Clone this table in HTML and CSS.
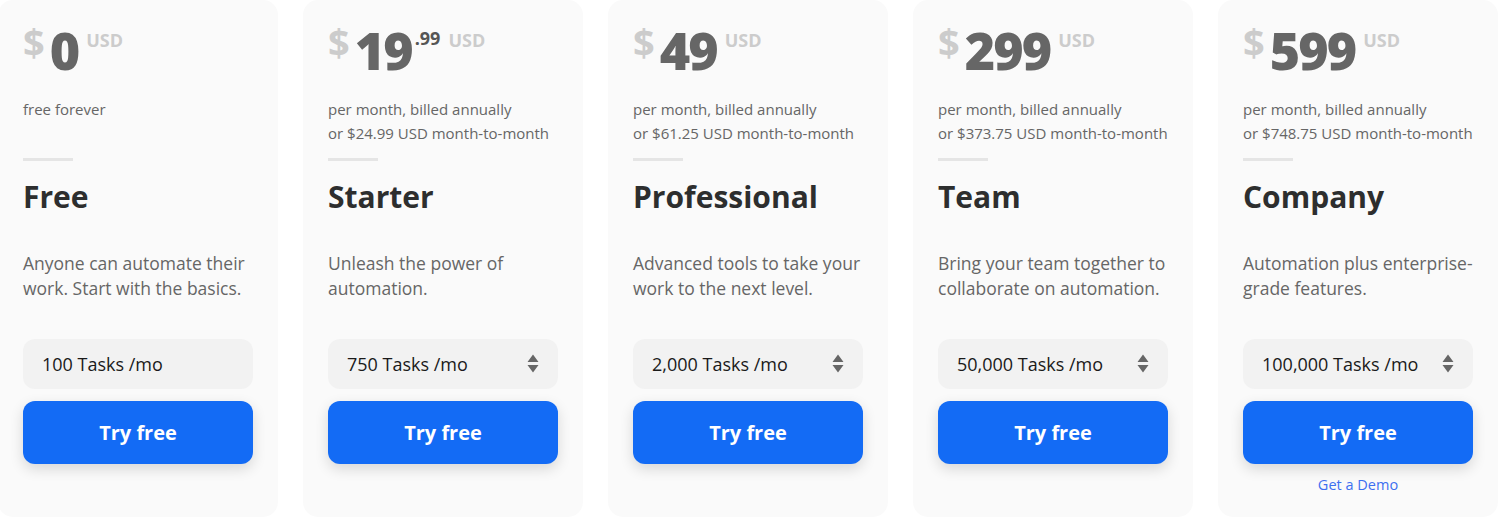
FILE: index.html
```html
<!DOCTYPE html>
<html lang="en">
<head>
<meta charset="utf-8">
<title>Pricing</title>
<link rel="stylesheet" href="styles.css">
</head>
<body>
<div class="plans">
  <div class="card">
    <div class="price"><span class="cur">$</span><span class="amt">0</span><span class="usd">USD</span></div>
    <p class="sub">free forever</p>
    <div class="rule"></div>
    <h2 class="name">Free</h2>
    <p class="desc">Anyone can automate their work. Start with the basics.</p>
    <div class="tasks"><span>100 Tasks /mo</span></div>
    <button class="try">Try free</button>
  </div>
  <div class="card">
    <div class="price"><span class="cur">$</span><span class="amt">19</span><span class="cents">.99</span><span class="usd">USD</span></div>
    <p class="sub">per month, billed annually<br>or $24.99 USD month-to-month</p>
    <div class="rule"></div>
    <h2 class="name">Starter</h2>
    <p class="desc">Unleash the power of automation.</p>
    <div class="tasks"><span>750 Tasks /mo</span><svg class="arrows" width="12" height="20" viewBox="0 0 12 20"><path d="M6 0.5L11.5 8H0.5Z M0.5 11H11.5L6 18.5Z" fill="#666"/></svg></div>
    <button class="try">Try free</button>
  </div>
  <div class="card">
    <div class="price"><span class="cur">$</span><span class="amt">49</span><span class="usd">USD</span></div>
    <p class="sub">per month, billed annually<br>or $61.25 USD month-to-month</p>
    <div class="rule"></div>
    <h2 class="name">Professional</h2>
    <p class="desc">Advanced tools to take your work to the next level.</p>
    <div class="tasks"><span>2,000 Tasks /mo</span><svg class="arrows" width="12" height="20" viewBox="0 0 12 20"><path d="M6 0.5L11.5 8H0.5Z M0.5 11H11.5L6 18.5Z" fill="#666"/></svg></div>
    <button class="try">Try free</button>
  </div>
  <div class="card">
    <div class="price"><span class="cur">$</span><span class="amt">299</span><span class="usd">USD</span></div>
    <p class="sub">per month, billed annually<br>or $373.75 USD month-to-month</p>
    <div class="rule"></div>
    <h2 class="name">Team</h2>
    <p class="desc">Bring your team together to collaborate on automation.</p>
    <div class="tasks"><span>50,000 Tasks /mo</span><svg class="arrows" width="12" height="20" viewBox="0 0 12 20"><path d="M6 0.5L11.5 8H0.5Z M0.5 11H11.5L6 18.5Z" fill="#666"/></svg></div>
    <button class="try">Try free</button>
  </div>
  <div class="card">
    <div class="price"><span class="cur">$</span><span class="amt">599</span><span class="usd">USD</span></div>
    <p class="sub">per month, billed annually<br>or $748.75 USD month-to-month</p>
    <div class="rule"></div>
    <h2 class="name">Company</h2>
    <p class="desc">Automation plus enterprise-grade features.</p>
    <div class="tasks"><span>100,000 Tasks /mo</span><svg class="arrows" width="12" height="20" viewBox="0 0 12 20"><path d="M6 0.5L11.5 8H0.5Z M0.5 11H11.5L6 18.5Z" fill="#666"/></svg></div>
    <button class="try">Try free</button>
    <a class="demo" href="#">Get a Demo</a>
  </div>
</div>
</body>
</html>
```
FILE: styles.css
```css
* { box-sizing: border-box; }
html, body { margin: 0; padding: 0; background: #fff; }
body { font-family: "Open Sans", "Liberation Sans", sans-serif; overflow: hidden; }

.plans {
  display: flex;
  gap: 25px;
  margin-left: -2px;
}

.card {
  width: 280px;
  height: 517px;
  flex: 0 0 280px;
  background: #fafafa;
  border-radius: 15px;
  padding: 24px 25px 0;
  display: flex;
  flex-direction: column;
}

.price {
  display: flex;
  align-items: flex-start;
  height: 52px;
}
.cur {
  font-size: 38px;
  line-height: 1;
  font-weight: 700;
  color: #ccc;
  margin-top: -1px;
}
.amt {
  font-size: 52px;
  line-height: 1;
  font-weight: 800;
  color: #666;
  margin-left: 5px;
  letter-spacing: -2px;
}
.cents {
  font-size: 18px;
  line-height: 1;
  font-weight: 700;
  color: #555;
  margin-top: 5px;
  margin-left: 3px;
}
.usd {
  font-size: 18px;
  line-height: 1;
  font-weight: 700;
  color: #ccc;
  margin-top: 7px;
  margin-left: 8px;
}

.sub {
  margin: 21px 0 0;
  height: 48px;
  font-size: 15px;
  line-height: 24px;
  color: #666;
}

.rule {
  width: 50px;
  height: 3px;
  background: #e5e5e5;
  margin-top: 13px;
}

.name {
  margin: 18px 0 0;
  font-size: 30px;
  line-height: 36px;
  font-weight: 700;
  color: #2d2e2e;
}

.desc {
  margin: 36px 0 0;
  height: 50px;
  font-size: 17.5px;
  line-height: 25px;
  color: #666;
}

.tasks {
  margin-top: 38px;
  height: 50px;
  border-radius: 12px;
  background: #f2f2f2;
  display: flex;
  align-items: center;
  justify-content: space-between;
  padding: 0 19px;
  font-size: 18px;
  color: #1a1a1a;
}
.arrows { display: block; }

.try {
  margin-top: 12px;
  height: 63px;
  width: 100%;
  border: 0;
  border-radius: 12px;
  background: #136bf5;
  color: #fff;
  font-family: inherit;
  font-size: 20px;
  font-weight: 700;
  box-shadow: 0 5px 14px rgba(0, 0, 0, 0.14);
}

.demo {
  margin-top: 11px;
  text-align: center;
  font-size: 14.5px;
  line-height: 20px;
  color: #3d6ff0;
  text-decoration: none;
}
```
